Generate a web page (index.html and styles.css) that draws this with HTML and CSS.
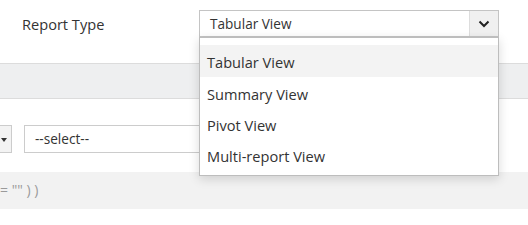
FILE: index.html
```html
<!DOCTYPE html>
<html lang="en">
<head>
    <meta charset="UTF-8">
    <title>Report Type</title>
    <link rel="stylesheet" href="styles.css">
</head>
<body>
    <div class="page">
        <div class="field-row">
            <label class="field-label">Report Type</label>
            <div class="select-wrap">
                <div class="select-box">
                    <span class="select-value">Tabular View</span>
                    <span class="select-btn">
                        <svg width="12" height="8" viewBox="0 0 12 8"><path d="M1.5 1.5 L6 6 L10.5 1.5" fill="none" stroke="#222" stroke-width="2"/></svg>
                    </span>
                </div>
                <ul class="select-menu">
                    <li class="active">Tabular View</li>
                    <li>Summary View</li>
                    <li>Pivot View</li>
                    <li>Multi-report View</li>
                </ul>
            </div>
        </div>

        <div class="band"></div>

        <div class="filter-row">
            <div class="mini-select"><span class="caret"></span></div>
            <div class="input-box">--select--</div>
        </div>

        <div class="code-band">= "" ) )</div>
    </div>
</body>
</html>
```

FILE: styles.css
```css
body {
    margin: 0;
    font-family: "Open Sans", Arial, sans-serif;
    font-size: 14px;
    color: #333;
    background: white;
}
.page {
    width: 528px;
    height: 225px;
    overflow: hidden;
}
.field-row {
    display: flex;
    align-items: flex-start;
    height: 63px;
    box-sizing: border-box;
    padding-top: 10px;
}
.field-label {
    width: 177px;
    padding-left: 22px;
    line-height: 27px;
    margin-top: 1px;
    font-size: 14.6px;
}
.select-wrap {
    position: relative;
}
.select-box {
    display: flex;
    width: 300px;
    height: 27px;
    box-sizing: border-box;
    border: 1px solid #c4c4c4;
    background: white;
}
.select-value {
    flex: 1;
    padding-left: 10px;
    line-height: 25px;
    font-size: 13.6px;
}
.select-btn {
    width: 28px;
    display: flex;
    align-items: center;
    justify-content: center;
    border-left: 1px solid #ddd;
    background: #f0f0f0;
}
.select-menu {
    position: absolute;
    top: 27px;
    left: 0;
    width: 300px;
    box-sizing: border-box;
    margin: 0;
    padding: 7px 0 5px;
    list-style: none;
    background: white;
    border: 1px solid #bdbdbd;
    box-shadow: 0 3px 10px rgba(0,0,0,0.15);
    z-index: 2;
}
.select-menu li {
    height: 31px;
    box-sizing: border-box;
    padding: 4px 0 0 7px;
    line-height: 27px;
    font-size: 14.6px;
}
.select-menu li.active {
    height: 32px;
    background: #f3f3f3;
}
.band {
    height: 36px;
    background: #eeeff0;
    border-top: 1px solid #dcdcdc;
    border-bottom: 1px solid #dcdcdc;
    box-sizing: border-box;
}
.filter-row {
    display: flex;
    gap: 12px;
    height: 73px;
    padding-top: 26px;
    box-sizing: border-box;
}
.mini-select {
    width: 12px;
    height: 28px;
    box-sizing: border-box;
    border: 1px solid #ccc;
    border-left: none;
    background: #f3f3f3;
    position: relative;
}
.caret {
    position: absolute;
    left: 1px;
    top: 12px;
    border-left: 3px solid transparent;
    border-right: 3px solid transparent;
    border-top: 4px solid #333;
}
.input-box {
    width: 300px;
    height: 28px;
    box-sizing: border-box;
    border: 1px solid #ccc;
    padding-left: 10px;
    line-height: 26px;
    font-size: 13.6px;
}
.code-band {
    height: 37px;
    background: #f2f2f2;
    color: #9a9a9a;
    font-size: 14px;
    line-height: 36px;
}
```
